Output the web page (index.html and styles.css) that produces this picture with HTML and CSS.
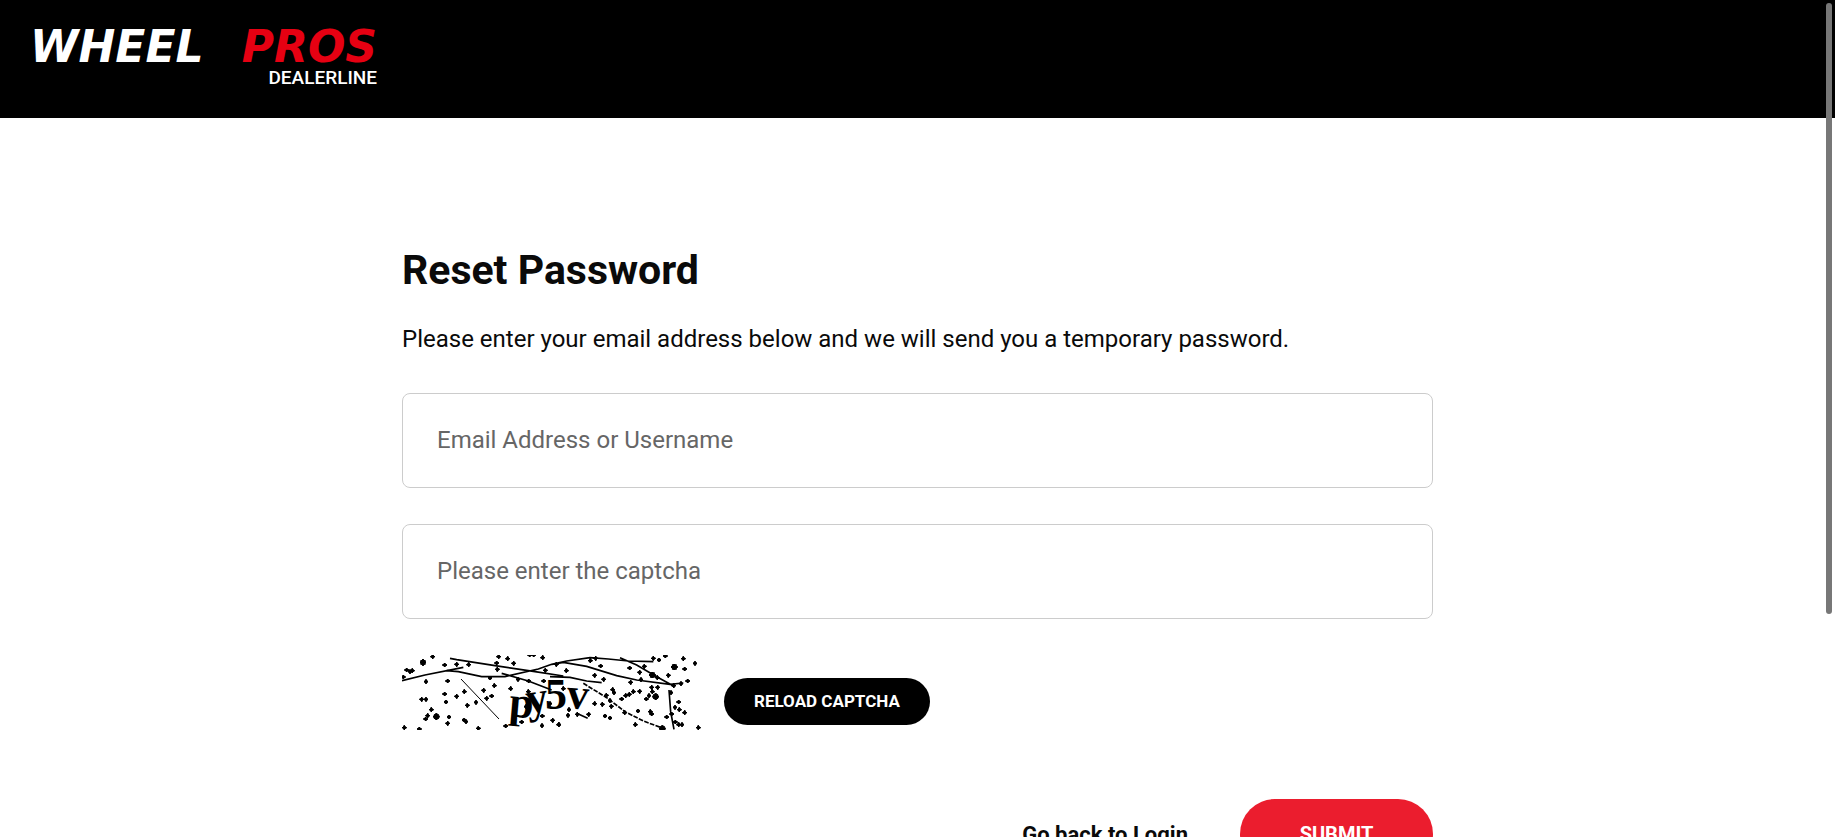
FILE: index.html
```html
<!DOCTYPE html>
<html lang="en">
<head>
<meta charset="utf-8">
<title>Reset Password</title>
<link rel="stylesheet" href="styles.css">
</head>
<body>
<header class="header">
  <a class="logo" href="#">
    <span class="wordmark"><span>WHEEL</span><span class="wordmark-accent">PROS</span></span>
    <span class="tagline">DEALERLINE</span>
  </a>
</header>
<main class="main">
  <h1 class="title">Reset Password</h1>
  <p class="intro">Please enter your email address below and we will send you a temporary password.</p>
  <form class="form">
    <input class="field" type="text" aria-label="Email Address or Username" placeholder="Email Address or Username">
    <input class="field" type="text" aria-label="Please enter the captcha" placeholder="Please enter the captcha">
    <div class="captcha-row">
      <svg class="captcha" viewBox="21 30 900 225" role="img" aria-label="Captcha">
        <defs>
          <marker id="speck" markerUnits="userSpaceOnUse" markerWidth="14" markerHeight="14" refX="7" refY="7" viewBox="0 0 14 14">
            <path d="M5 0h4v3h2v2h3v4h-3v2h-2v3h-4v-3h-2v-2h-3v-4h3v-2h2z"/>
          </marker>
          <marker id="blot" markerUnits="userSpaceOnUse" markerWidth="20" markerHeight="20" refX="7" refY="7" viewBox="0 0 14 14">
            <path d="M5 0h4v2h3v3h2v4h-2v3h-3v2h-4v-2h-3v-3h-2v-4h2v-3h3z"/>
          </marker>
        </defs>
        <g class="captcha-lines">
          <path d="M21 107L90 90L205 67M165 40L185 44L300 62L420 80L505 93M155 77L190 80L260 95L330 95L430 72L470 58L515 48L585 38L640 42L700 48L775 50M320 85L400 108L470 135M470 58L505 52L575 64L665 92L725 105L825 118L865 114M675 38L725 60L785 95L840 125M465 95L525 97L575 108L620 113M822 135L827 200L837 253M545 205L578 220"/>
          <path class="thin" d="M198 102L312 222"/>
          <path class="dashed" d="M565 115L635 158L690 200L745 228L810 252"/>
        </g>
        <g class="captcha-text">
          <text x="340" y="214" transform="rotate(5 340 214)">p</text>
          <text x="398" y="206" transform="rotate(-8 398 206)">y</text>
          <text x="450" y="192">5</text>
          <text x="512" y="188" transform="rotate(5 512 188)">v</text>
        </g>
        <path class="captcha-dots" d="M113 35h0M35 75h0M52 77h0M45 80h0M25 96h0M93 110h0M149 60h0M185 58h0M221 59h0M158 108h0M149 147h0M153 171h0M185 154h0M208 140h0M217 181h0M243 172h0M266 136h0M298 122h0M285 99h0M347 131h0M305 54h0M311 35h0M338 41h0M356 55h0M307 73h0M80 163h0M93 163h0M109 194h0M98 212h0M92 222h0M162 216h0M158 235h0M207 225h0M213 230h0M28 248h0M73 252h0M250 250h0M400 140h0M393 185h0M380 231h0M401 108h0M446 108h0M451 76h0M484 58h0M473 226h0M491 239h0M442 213h0M443 38h0M332 243h0M275 160h0M290 153h0M465 176h0M369 103h0M441 242h0M404 30h0M416 30h0
          M514 77h0M599 91h0M626 103h0M617 63h0M586 47h0M602 40h0M704 69h0M734 82h0M748 64h0M787 98h0M820 91h0M775 40h0M792 45h0M811 33h0M869 72h0M865 41h0M900 55h0M878 108h0M707 112h0M738 104h0M770 127h0M788 127h0M772 140h0M762 152h0M754 162h0M734 139h0M715 140h0M703 148h0M692 152h0M680 162h0M653 134h0M657 143h0M634 151h0M645 167h0M649 184h0M622 178h0M599 176h0M581 208h0M547 208h0M519 211h0M522 194h0M492 239h0M630 213h0M645 219h0M689 203h0M729 198h0M721 239h0M766 200h0M770 207h0M815 216h0M840 187h0M853 194h0M869 203h0M851 171h0M828 143h0M836 122h0M830 207h0M841 231h0M851 239h0M861 239h0M910 248h0M505 131h0M858 116h0"/>
        <path class="captcha-blots" d="M84 52h0M124 215h0M772 90h0M838 66h0M782 155h0M802 251h0"/>
      </svg>
      <button class="reload" type="button">RELOAD CAPTCHA</button>
    </div>
    <div class="actions">
      <a class="back" href="#">Go back to Login</a>
      <button class="submit" type="submit">SUBMIT</button>
    </div>
  </form>
</main>
<div class="scroll-thumb"></div>
</body>
</html>
```
FILE: styles.css
```css
* {
  box-sizing: border-box;
}

html,
body {
  height: 100%;
  overflow: hidden;
}

body {
  margin: 0;
  background: #fff;
  color: #0a0a0a;
  font-family: Roboto, "Liberation Sans", sans-serif;
  font-size: 24px;
}

.header {
  display: flex;
  align-items: flex-start;
  padding: 28px 30px;
  background: #000;
}

.logo {
  display: flex;
  flex-direction: column;
  align-items: flex-end;
  width: 347px;
  color: #fff;
  text-decoration: none;
}

.wordmark {
  display: flex;
  justify-content: space-between;
  width: 100%;
  font: italic bold 44px/38px "DejaVu Sans", sans-serif;
}

.wordmark-accent {
  color: #e60012;
}

.tagline {
  font-size: 19px;
  font-weight: 500;
  line-height: 24px;
}

.main {
  width: 100%;
  max-width: 1031px;
  margin: 0 auto;
  padding-top: 124px;
}

.title {
  margin: 0;
  font-size: 41px;
  font-weight: 700;
  line-height: 56px;
}

.intro {
  margin: 24px 0 36px;
  line-height: 35px;
}

.form {
  display: flex;
  flex-direction: column;
  gap: 36px;
}

.field {
  width: 100%;
  height: 95px;
  padding: 0 34px 2px;
  border: 1px solid #ccc;
  border-radius: 8px;
  background: #fff;
  color: #0a0a0a;
  font: inherit;
}

.field::placeholder {
  color: #666;
  opacity: 1;
}

.captcha-row {
  display: flex;
  align-items: flex-end;
  gap: 22px;
}

.captcha {
  width: 300px;
  height: 75px;
}

.captcha-lines {
  fill: none;
  stroke: #000;
  stroke-width: 5;
}

.thin {
  stroke-width: 3;
}

.dashed {
  stroke-dasharray: 14 4;
}

.captcha-text {
  font: bold 132px "Liberation Serif", serif;
}

.captcha-dots {
  marker: url(#speck);
}

.captcha-blots {
  marker: url(#blot);
}

.reload,
.submit {
  border: 0;
  color: #fff;
  font-family: inherit;
  font-weight: 700;
}

.reload {
  height: 47px;
  margin-bottom: 5px;
  padding: 0 30px 2px;
  border-radius: 24px;
  background: #000;
  font-size: 17px;
}

.actions {
  display: flex;
  align-items: center;
  justify-content: flex-end;
  gap: 52px;
  margin-top: 33px;
}

.back {
  color: #0a0a0a;
  font-size: 22px;
  font-weight: 700;
  text-decoration: none;
}

.submit {
  width: 193px;
  height: 70px;
  border-radius: 35px;
  background: #eb1d2e;
  font-size: 20px;
}

.scroll-thumb {
  position: fixed;
  top: 3px;
  right: 3px;
  width: 6px;
  height: 73vh;
  border-radius: 3px;
  background: #777;
}
```
